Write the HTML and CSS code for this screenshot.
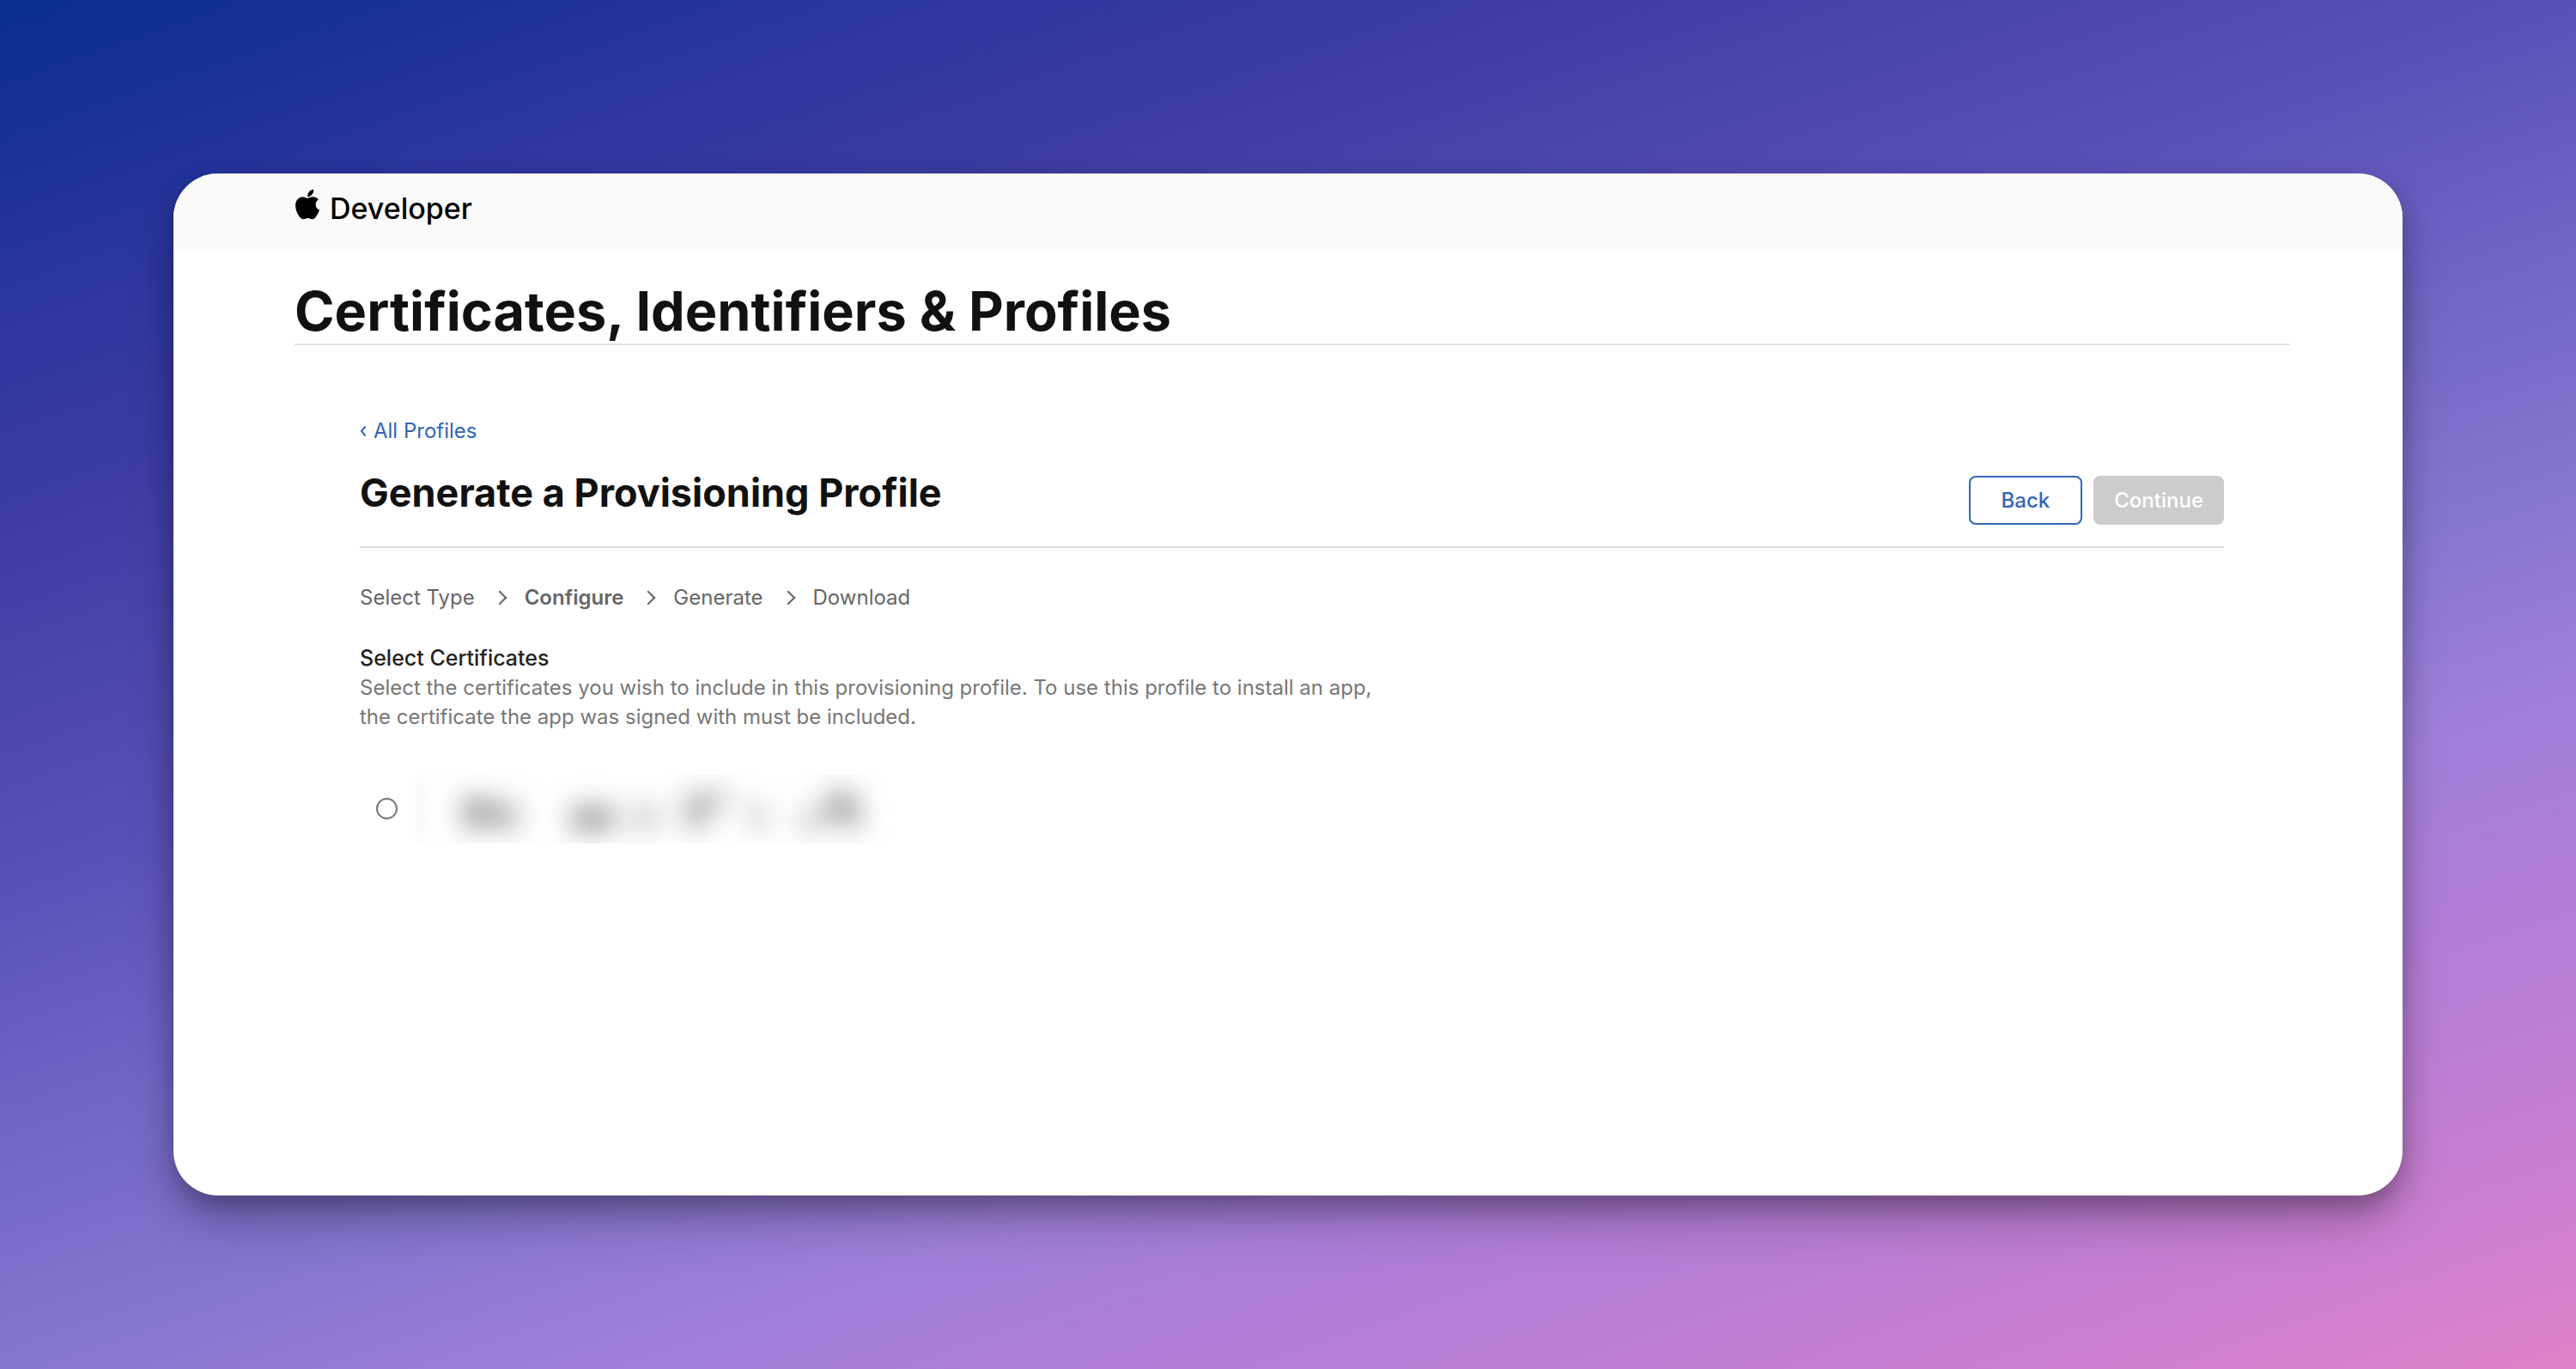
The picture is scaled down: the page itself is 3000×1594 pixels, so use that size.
FILE: index.html
```html
<!DOCTYPE html>
<html lang="en">
<head>
	<meta charset="UTF-8">
	<meta name="viewport" content="width=device-width, initial-scale=1">
	<title>Certificates, Identifiers &amp; Profiles - Apple Developer</title>
	<link rel="stylesheet" href="styles.css">
</head>
<body>
	<div class="window">
		<!-- global nav -->
		<header class="nav">
			<a class="logo" href="#">
				<svg class="apple" viewBox="0 0 28 36" aria-hidden="true">
					<path d="M21.200 0.400C21.500 3.200 20.300 5.400 18.900 6.900C17.500 8.300 16 9 14.200 8.900C14 6.400 15 4.300 16.400 2.800C17.700 1.500 19.500 0.600 21.200 0.400Z"/>
					<path d="M27 12.200C24.900 13.500 23.700 15.500 23.700 18.200C23.700 21.200 25.300 23.500 28 24.600C27.400 26.700 26.300 28.900 24.900 31C23.500 33.100 22.100 35.200 19.900 35.200C17.700 35.200 17.100 33.900 14.500 33.900C12 33.900 11.200 35.200 9.100 35.200C7 35.200 5.500 33.300 3.900 31C1.700 27.900 0.100 23.500 0.100 19.500C0.100 12.900 4.300 9.300 8.400 9.300C10.700 9.300 12.500 10.700 14 10.700C15.400 10.700 17.500 9.200 20.200 9.200C23.100 9.200 25.400 10.200 27 12.200Z"/>
				</svg>
				<span>Developer</span>
			</a>
		</header>

		<main class="page">
			<h1 class="title">Certificates, Identifiers &amp; Profiles</h1>

			<div class="content">
				<a class="back-link" href="#">
					<svg class="back-arrow" viewBox="0 0 8 14" aria-hidden="true"><path d="M6.500 1.500L2 7l4.500 5.500"/></svg>
					<span>All Profiles</span>
				</a>

				<div class="toolbar">
					<h2 class="heading">Generate a Provisioning Profile</h2>
					<div class="buttons">
						<button class="btn btn-back" type="button">Back</button>
						<button class="btn btn-continue" type="button" disabled>Continue</button>
					</div>
				</div>

				<!-- steps -->
				<ol class="steps">
					<li>Select Type</li>
					<li class="current">Configure</li>
					<li>Generate</li>
					<li>Download</li>
				</ol>

				<section class="certs">
					<h3>Select Certificates</h3>
					<p>Select the certificates you wish to include in this provisioning profile. To use this profile to install an app, the certificate the app was signed with must be included.</p>
					<div class="cert">
						<input type="radio" id="cert" name="cert" aria-label="Certificate">
						<label class="redacted" for="cert">
							<svg viewBox="0 0 552 81" aria-hidden="true">
								<defs>
									<filter id="soft" x="-20%" y="-80%" width="140%" height="260%"><feGaussianBlur stdDeviation="15"/></filter>
								</defs>
								<g filter="url(#soft)">
									<rect x="-12" y="8" width="12" height="64" opacity=".3"/>
									<rect x="54" y="26" width="36" height="38"/>
									<rect x="88" y="34" width="34" height="30" opacity=".8"/>
									<rect x="180" y="36" width="52" height="32"/>
									<rect x="250" y="38" width="36" height="26" opacity=".6"/>
									<rect x="314" y="22" width="26" height="42" opacity=".9"/>
									<rect x="340" y="18" width="26" height="24" opacity=".6"/>
									<rect x="388" y="34" width="22" height="32" opacity=".5"/>
									<rect x="446" y="42" width="30" height="24" opacity=".6"/>
									<rect x="478" y="20" width="36" height="36"/>
									<rect x="500" y="40" width="20" height="24" opacity=".8"/>
								</g>
							</svg>
						</label>
					</div>
				</section>
			</div>
		</main>
	</div>
</body>
</html>
```
FILE: styles.css
```css
*{box-sizing: border-box;}
body{margin: 0;min-height: 100vh;padding: 202px;display: flex;font-family: Inter, "Liberation Sans", sans-serif;font-size: 24px;
	color: #111;background: linear-gradient(161deg, #0b2f8f 0%, #153093 5%, #2d369f 14%, #3c3ca3 23%, #5950b6 39%, #6f65c4 50%, #8776d0 61%, #a07fda 70%, #ad7dd9 76%, #bf7dd3 86%, #cf7fd0 93%, #e082c8 100%);}
h1, h2, h3, p, ol{margin: 0;padding: 0;}
a{text-decoration: none;}

.window{flex: 1;background: #fff;border-radius: 52px;overflow: hidden;
	box-shadow: 0 36px 60px -10px rgba(0,0,0,0.25), 0 12px 30px rgba(0,0,0,0.25);}

/* nav */
.nav{height: 90px;padding: 17px 142px;background: #fafafa;}
.logo{display: inline-flex;align-items: flex-start;gap: 12px;color: #000;font-size: 34px;line-height: 48px;font-weight: 500;}
.apple{width: 28px;height: 36px;margin-top: 1px;}

/* page */
.page{padding: 32px 131px 0 141px;}
.title{font-size: 63px;line-height: 76px;font-weight: 700;border-bottom: 2px solid #e3e3e3;}
.content{padding: 84px 77px 0 76px;}
.back-link{display: inline-flex;align-items: center;gap: 8px;line-height: 32px;color: #2f66b8;}
.back-arrow{width: 8px;height: 14px;fill: none;stroke: currentColor;stroke-width: 2;}

.toolbar{display: flex;justify-content: space-between;align-items: flex-start;padding: 30px 0 25px;border-bottom: 2px solid #dcdcdc;}
.heading{font-size: 45px;line-height: 52px;font-weight: 700;}
.buttons{display: flex;gap: 13px;padding-top: 6px;}
.btn{height: 57px;padding: 0 22px;border: 2px solid #2f66b8;border-radius: 8px;font: 500 24px Inter, sans-serif;}
.btn-back{padding: 0 36px;background: #fff;color: #2f66b8;}
.btn-continue{background: #ccc;border-color: #ccc;color: #fff;}

/* steps */
.steps{display: flex;list-style: none;padding: 42px 0 36px;line-height: 32px;color: #666;}
.steps li{display: flex;align-items: center;}
.steps li + li::before{content: "";width: 10px;height: 10px;margin: 0 23px;border: solid #666;border-width: 2px 2px 0 0;transform: rotate(45deg);}
.steps .current{font-weight: 600;}

/* certificates */
.certs h3{font-size: 25px;line-height: 36px;font-weight: 500;color: #222;}
.certs p{max-width: 1200px;line-height: 34px;color: #777;}
.cert{display: flex;align-items: center;gap: 21px;padding: 49px 0 0 19px;}
.cert input{appearance: none;width: 25px;height: 25px;margin: 0;border: 2px solid #777;border-radius: 50%;background: #fff;}
.redacted svg{display: block;width: 552px;height: 81px;fill: #aaa;}
```
